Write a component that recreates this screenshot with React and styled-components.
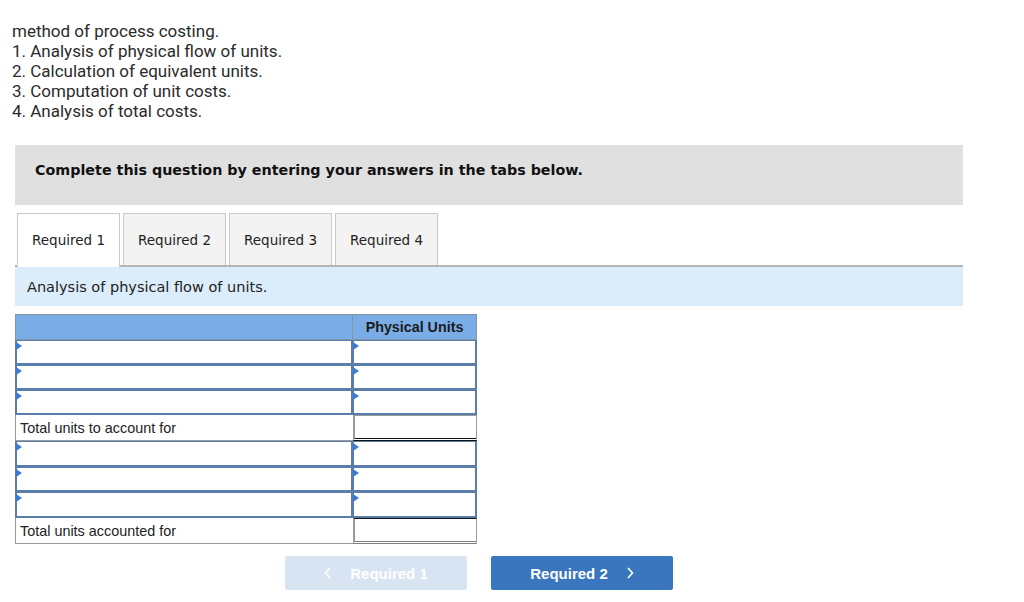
import React from "react";
import styled, { createGlobalStyle } from "styled-components";

const Global = createGlobalStyle`
  html, body { margin: 0; padding: 0; background: #fff; }
  body { font-family: "Liberation Sans", Arial, sans-serif; color: #222; }
  * { box-sizing: border-box; }
`;

const Page = styled.div`
  width: 1024px;
  height: 602px;
  padding-top: 21px;
  overflow: hidden;
`;

const Intro = styled.div`
  margin-left: 12px;
  font-family: Roboto, "Open Sans", sans-serif;
  font-size: 17px;
  line-height: 20px;
  color: #2b2b2b;
`;

const Instruction = styled.div`
  margin: 24px 0 0 15px;
  width: 948px;
  height: 60px;
  background: #e0e0e0;
  padding: 16px 0 0 20px;
  font-family: "DejaVu Sans", Verdana, sans-serif;
  font-weight: bold;
  font-size: 14.3px;
  line-height: 18px;
  color: #111;
`;

const TabBar = styled.div`
  margin: 8px 0 0 15px;
  width: 948px;
  display: flex;
  gap: 3px;
  padding-left: 2px;
  border-bottom: 2px solid #b5b5b5;
`;

const Tab = styled.div`
  width: 103px;
  display: flex;
  align-items: center;
  justify-content: center;
  font-family: "DejaVu Sans", Verdana, sans-serif;
  font-size: 13.5px;
  color: #222;
  border: 1px solid #c9c9c9;
  border-bottom: none;
  background: ${(p) => (p.$active ? "#fff" : "#f3f3f3")};
  margin-bottom: ${(p) => (p.$active ? "-2px" : "0")};
  height: ${(p) => (p.$active ? "54px" : "52px")};
  padding-bottom: ${(p) => (p.$active ? "2px" : "0")};
`;

const Band = styled.div`
  margin-left: 15px;
  width: 948px;
  height: 39px;
  background: #dbecfb;
  display: flex;
  align-items: center;
  padding-left: 12px;
  font-family: "DejaVu Sans", Verdana, sans-serif;
  font-size: 14.5px;
  color: #222;
`;

const Table = styled.div`
  margin: 8px 0 0 15px;
  width: 462px;
  display: grid;
  grid-template-columns: 338px 124px;
`;

const HeadCell = styled.div`
  height: 26px;
  background: #7aade6;
  border: 1px solid #8594a6;
  border-left-width: ${(p) => (p.$right ? "0" : "1px")};
  display: flex;
  align-items: center;
  justify-content: center;
  font-weight: bold;
  font-size: 14.3px;
  color: #1c1c1c;
`;

const InputCell = styled.div`
  position: relative;
  height: ${(p) => p.$h || 25}px;
  background: #fff;
  border-style: solid;
  border-color: #5a7eab;
  border-width: 1px 2px 2px 2px;
  border-left-width: ${(p) => (p.$right ? "1px" : "2px")};
  &::before {
    content: "";
    position: absolute;
    left: -1px;
    top: 1px;
    width: 0;
    height: 0;
    border-top: 4px solid transparent;
    border-bottom: 4px solid transparent;
    border-left: 6px solid #3a7bd5;
  }
`;

const LabelCell = styled.div`
  height: 26px;
  background: #fff;
  border-left: 1px solid #9a9a9a;
  border-bottom: 1px solid #9a9a9a;
  display: flex;
  align-items: center;
  padding-left: 4px;
  font-size: 14.4px;
  color: #222;
`;

const TotalCell = styled.div`
  height: 26px;
  background: #fff;
  border-left: 2px solid #9a9a9a;
  border-right: 1px solid #9a9a9a;
  border-top: 1px solid ${(p) => (p.$last ? "#111" : "#9a9a9a")};
  border-bottom: 3px double ${(p) => (p.$last ? "#808080" : "#111")};
`;

const Nav = styled.div`
  margin-top: 12px;
  padding-left: 285px;
  display: flex;
  gap: 24px;
`;

const NavButton = styled.div`
  width: 182px;
  height: 34px;
  border-radius: 2px;
  display: flex;
  align-items: center;
  justify-content: center;
  gap: 18px;
  font-weight: bold;
  font-size: 15px;
  color: #fff;
  background: ${(p) => (p.$disabled ? "#d9e4f2" : "#3a76bd")};
`;

const Chevron = ({ left }) => (
  <svg width="8" height="12" viewBox="0 0 8 12">
    <path
      d={left ? "M6 1 L1.5 6 L6 11" : "M2 1 L6.5 6 L2 11"}
      fill="none"
      stroke="#fff"
      strokeWidth="1.6"
    />
  </svg>
);

export default function App() {
  const inputRow = (k, h) => (
    <React.Fragment key={k}>
      <InputCell $h={h} />
      <InputCell $right $h={h} />
    </React.Fragment>
  );
  return (
    <>
      <Global />
      <Page>
        <Intro>
          <div>method of process costing.</div>
          <div>1. Analysis of physical flow of units.</div>
          <div>2. Calculation of equivalent units.</div>
          <div>3. Computation of unit costs.</div>
          <div>4. Analysis of total costs.</div>
        </Intro>
        <Instruction>
          Complete this question by entering your answers in the tabs below.
        </Instruction>
        <TabBar>
          <Tab $active>Required 1</Tab>
          <Tab>Required 2</Tab>
          <Tab>Required 3</Tab>
          <Tab>Required 4</Tab>
        </TabBar>
        <Band>Analysis of physical flow of units.</Band>
        <Table>
          <HeadCell />
          <HeadCell $right>Physical Units</HeadCell>
          {inputRow("a", 25)}
          {inputRow("b", 25)}
          {inputRow("c", 25)}
          <LabelCell>Total units to account for</LabelCell>
          <TotalCell />
          {inputRow("d", 26)}
          {inputRow("e", 25)}
          {inputRow("f", 26)}
          <LabelCell>Total units accounted for</LabelCell>
          <TotalCell $last />
        </Table>
        <Nav>
          <NavButton $disabled>
            <Chevron left />
            Required 1
          </NavButton>
          <NavButton>
            Required 2
            <Chevron />
          </NavButton>
        </Nav>
      </Page>
    </>
  );
}
